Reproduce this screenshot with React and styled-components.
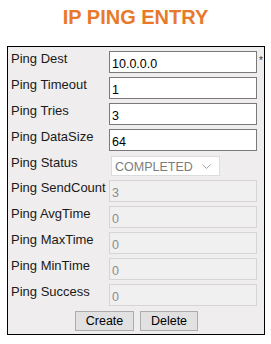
import React from 'react';
import styled, { createGlobalStyle } from 'styled-components';

const Global = createGlobalStyle`
  body {
    margin: 0;
    background: #ffffff;
    font-family: 'Liberation Sans', Arial, sans-serif;
  }
`;

const Page = styled.div`
  width: 271px;
  padding-top: 6px;
`;

const Title = styled.h1`
  margin: 0;
  text-align: center;
  font-family: 'Liberation Sans', Arial, sans-serif;
  font-size: 20px;
  line-height: 23px;
  font-weight: bold;
  color: #e8782a;
`;

const Panel = styled.div`
  box-sizing: border-box;
  width: 258px;
  margin: 17px 0 0 7px;
  border: 1px solid #000;
  background: #efeded;
  padding: 4px 0 3px 3px;
`;

const Form = styled.div`
  display: grid;
  grid-template-columns: 98px 148px 8px;
  row-gap: 4px;
`;

const Label = styled.div`
  font-size: 13px;
  line-height: 16px;
  color: #1a1a1a;
  white-space: nowrap;
`;

const Field = styled.input`
  box-sizing: border-box;
  width: 148px;
  height: 22px;
  margin: 0;
  padding: 4px 2px 0;
  font-family: 'Liberation Sans', Arial, sans-serif;
  font-size: 12.5px;
  border: 1px solid ${p => (p.disabled ? '#d5d5d5' : '#7a7a7a')};
  background: ${p => (p.disabled ? '#f0f0f0' : '#ffffff')};
  color: ${p => (p.disabled ? '#8c8c8c' : '#000000')};
  outline: none;
`;

const Required = styled.span`
  font-size: 10px;
  line-height: 10px;
  padding: 5px 0 0 2px;
  color: #333;
`;

const Select = styled.div`
  box-sizing: border-box;
  width: 109px;
  height: 20px;
  margin: 1px 0 0 2px;
  padding: 1px 8px 0 3px;
  display: flex;
  align-items: center;
  justify-content: space-between;
  border: 1px solid #dcdcdc;
  background: #ffffff;
  color: #7d7d7d;
  font-family: 'Liberation Sans', Arial, sans-serif;
  font-size: 12.5px;
`;

const Buttons = styled.div`
  grid-column: 1 / -1;
  display: flex;
  justify-content: center;
  gap: 6px;
  margin: 1px 0 0 -3px;
`;

const Button = styled.button`
  box-sizing: border-box;
  width: ${p => p.w}px;
  height: 20px;
  padding: 0;
  border: 1px solid #adadad;
  background: #e1e1e1;
  color: #000;
  font-family: 'Liberation Sans', Arial, sans-serif;
  font-size: 12.5px;
`;

const Chevron = () => (
  <svg width="9" height="5" viewBox="0 0 9 5">
    <path d="M0.5 0.5 L4.5 4.5 L8.5 0.5" fill="none" stroke="#a8a8a8" strokeWidth="1" />
  </svg>
);

const editable = [
  ['Ping Dest', '10.0.0.0', true],
  ['Ping Timeout', '1'],
  ['Ping Tries', '3'],
  ['Ping DataSize', '64'],
];

const readonly = [
  ['Ping SendCount', '3'],
  ['Ping AvgTime', '0'],
  ['Ping MaxTime', '0'],
  ['Ping MinTime', '0'],
  ['Ping Success', '0'],
];

const App = () => {
  return (
    <Page>
      <Global />
      <Title>IP PING ENTRY</Title>
      <Panel>
        <Form>
          {editable.map(([label, value, req]) => (
            <React.Fragment key={label}>
              <Label>{label}</Label>
              <Field defaultValue={value} />
              {req ? <Required>*</Required> : <span />}
            </React.Fragment>
          ))}
          <Label>Ping Status</Label>
          <Select>
            <span>COMPLETED</span>
            <Chevron />
          </Select>
          <span />
          {readonly.map(([label, value]) => (
            <React.Fragment key={label}>
              <Label>{label}</Label>
              <Field defaultValue={value} disabled />
              <span />
            </React.Fragment>
          ))}
          <Buttons>
            <Button w={59}>Create</Button>
            <Button w={58}>Delete</Button>
          </Buttons>
        </Form>
      </Panel>
    </Page>
  );
};

export default App;
